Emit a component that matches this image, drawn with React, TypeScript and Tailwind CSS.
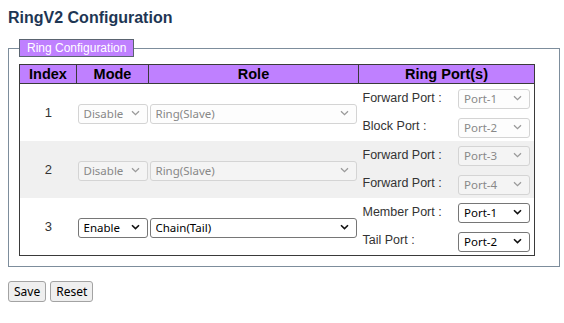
import type { ReactNode } from "react";

type Row = {
  index: number;
  mode: string;
  role: string;
  ports: { label: string; value: string }[];
  enabled: boolean;
};

const rows: Row[] = [
  {
    index: 1,
    mode: "Disable",
    role: "Ring(Slave)",
    ports: [
      { label: "Forward Port :", value: "Port-1" },
      { label: "Block Port :", value: "Port-2" },
    ],
    enabled: false,
  },
  {
    index: 2,
    mode: "Disable",
    role: "Ring(Slave)",
    ports: [
      { label: "Forward Port :", value: "Port-3" },
      { label: "Forward Port :", value: "Port-4" },
    ],
    enabled: false,
  },
  {
    index: 3,
    mode: "Enable",
    role: "Chain(Tail)",
    ports: [
      { label: "Member Port :", value: "Port-1" },
      { label: "Tail Port :", value: "Port-2" },
    ],
    enabled: true,
  },
];

function Chevron({ enabled }: { enabled: boolean }) {
  return (
    <svg
      width="9"
      height="6"
      viewBox="0 0 9 6"
      className="pointer-events-none absolute right-[8px] top-1/2 -translate-y-1/2"
    >
      <path
        d="M1 1.2l3.5 3.4L8 1.2"
        fill="none"
        stroke={enabled ? "#111111" : "#9a9a9a"}
        strokeWidth={enabled ? 1.6 : 1.3}
      />
    </svg>
  );
}

function Select({
  value,
  enabled,
  className,
}: {
  value: string;
  enabled: boolean;
  className: string;
}) {
  return (
    <div className={`relative ${className}`}>
      <select
        disabled={!enabled}
        defaultValue={value}
        className={
          enabled
            ? "h-[20px] w-full appearance-none rounded-[3px] border border-[#767676] bg-white pl-[5px] font-['Noto_Sans',sans-serif] text-[11.5px] leading-[18px] text-black outline-none"
            : "h-[20px] w-full appearance-none rounded-[3px] border border-[#d4d4d4] bg-[#fafafa]/40 pl-[5px] font-['Noto_Sans',sans-serif] text-[11.5px] leading-[18px] text-[#888888] outline-none"
        }
      >
        <option>{value}</option>
      </select>
      <Chevron enabled={enabled} />
    </div>
  );
}

function Th({ children }: { children: ReactNode }) {
  return (
    <th className="h-[19px] border border-[#3a3a3a] p-0 text-center text-[14.5px] font-bold leading-[17px] text-black">
      {children}
    </th>
  );
}

export default function App() {
  return (
    <div className="min-h-screen bg-white px-[8px] pt-[8px] font-[Arial,'Liberation_Sans',Helvetica,sans-serif]">
      <h1 className="text-[16px] font-bold leading-[20px] text-[#1e3654]">
        RingV2 Configuration
      </h1>

      <fieldset className="mt-[11px] w-[552px] border border-[#7d8d9c] px-[10px] pb-[10px] pt-[7px]">
        <legend className="border border-[#5a6470] bg-[#bf80ff] px-[7px] text-[12px] leading-[16px] text-white">
          Ring Configuration
        </legend>

        <table className="w-[515px] table-fixed border-collapse border border-[#3a3a3a]">
          <colgroup>
            <col className="w-[57px]" />
            <col className="w-[72px]" />
            <col className="w-[210px]" />
            <col className="w-[176px]" />
          </colgroup>
          <thead>
            <tr className="bg-[#bf80ff]">
              <Th>Index</Th>
              <Th>Mode</Th>
              <Th>Role</Th>
              <Th>Ring Port(s)</Th>
            </tr>
          </thead>
          <tbody>
            {rows.map((row) => (
              <tr
                key={row.index}
                className={row.index === 2 ? "bg-[#f0f0f0]" : "bg-white"}
              >
                <td className="p-0 text-center text-[13px] text-[#333333]">
                  {row.index}
                </td>
                <td className="px-px py-0">
                  <Select value={row.mode} enabled={row.enabled} className="w-[70px]" />
                </td>
                <td className="px-px py-0">
                  <Select value={row.role} enabled={row.enabled} className="w-[207px]" />
                </td>
                <td className="py-0 pl-[4px] pr-[4px]">
                  {row.ports.map((p, i) => (
                    <div key={i} className="flex h-[28.5px] items-center justify-between">
                      <span className="text-[12.5px] text-[#333333]">{p.label}</span>
                      <Select value={p.value} enabled={row.enabled} className="w-[72px]" />
                    </div>
                  ))}
                </td>
              </tr>
            ))}
          </tbody>
        </table>
      </fieldset>

      <div className="mt-[14px] flex gap-[4px]">
        <button className="h-[21px] rounded-[3px] border border-[#a3a3a3] bg-[#efefef] px-[5px] font-['Noto_Sans',sans-serif] text-[12px] leading-[18px] text-black">
          Save
        </button>
        <button className="h-[21px] rounded-[3px] border border-[#a3a3a3] bg-[#efefef] px-[5px] font-['Noto_Sans',sans-serif] text-[12px] leading-[18px] text-black">
          Reset
        </button>
      </div>
    </div>
  );
}
